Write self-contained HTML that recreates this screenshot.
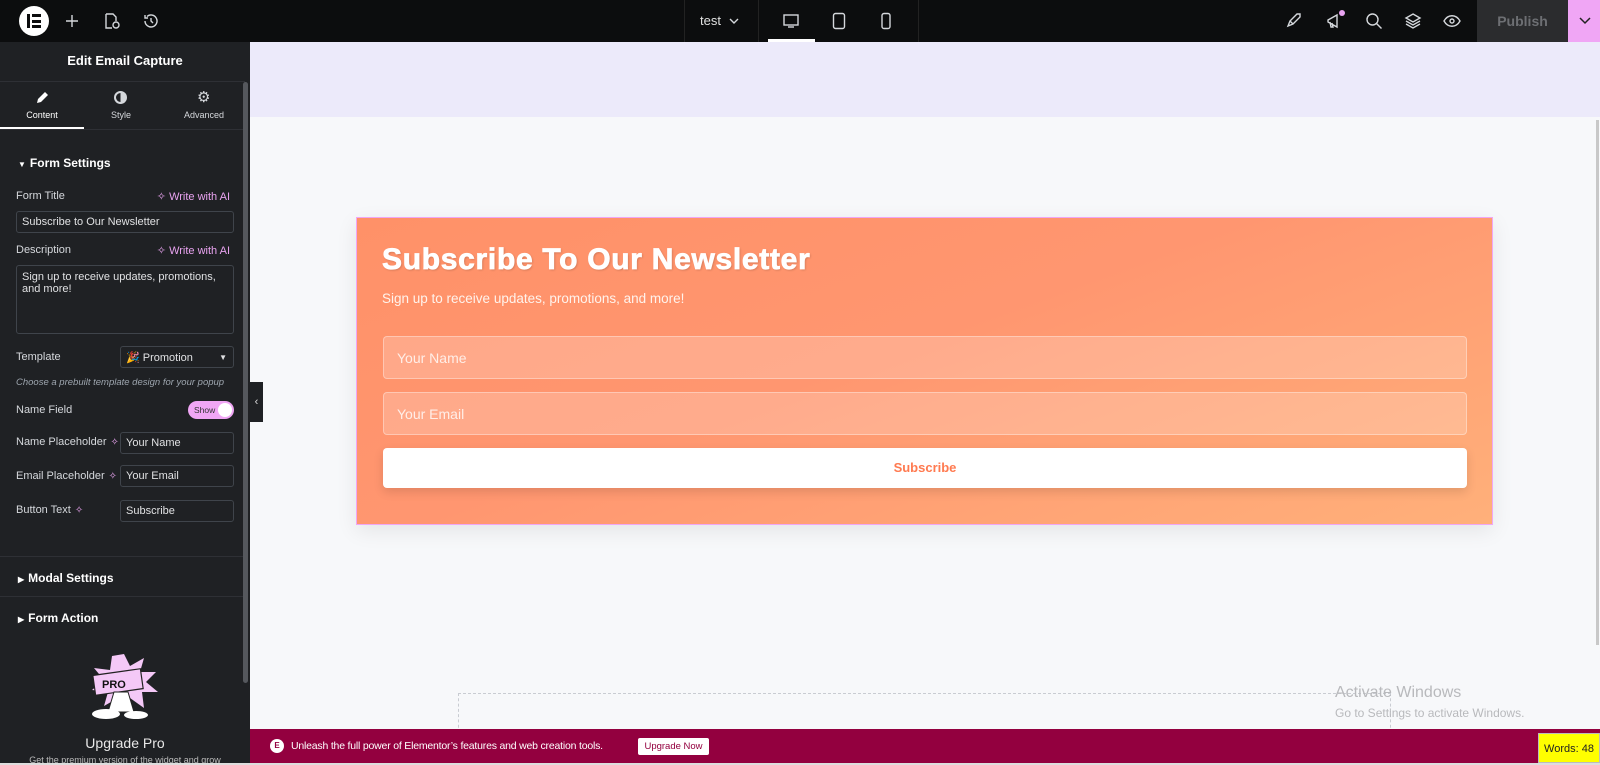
<!DOCTYPE html>
<html><head><meta charset="utf-8"><style>
*{box-sizing:border-box;margin:0;padding:0}
body{width:1600px;height:765px;overflow:hidden;font-family:"Liberation Sans",sans-serif;background:#f7f8fa;position:relative}
.a{position:absolute}
#top{left:0;top:0;width:1600px;height:42px;background:#0c0d0e}
#side{left:0;top:42px;width:250px;height:723px;background:#1f2124;color:#d5d8dc;font-size:11px}
.lbl{position:absolute;left:16px;font-size:11px;color:#d5d8dc}
.inp{position:absolute;background:#1f2124;border:1px solid #3f444b;border-radius:3px;color:#e0e1e3;font-size:11px;padding:0 5px;display:flex;align-items:center}
.ai{position:absolute;right:20px;color:#e9a3f0;font-size:11px}
.spk{color:#e9a3f0;font-size:10px;margin-left:4px}
.hd{position:absolute;left:18px;font-weight:bold;font-size:12px;color:#fff}
.dv{position:absolute;left:0;width:245px;height:1px;background:#2e3035}
.ic{stroke:#d5d8dc;fill:none;stroke-width:1.4}
</style></head><body>
<div id="top" class="a">
 <div class="a" style="left:19px;top:6px;width:30px;height:30px;border-radius:50%;background:#fff"></div>
 <div class="a" style="left:27px;top:14px;width:3px;height:14px;background:#0c0d0e"></div>
 <div class="a" style="left:32px;top:14px;width:9px;height:3px;background:#0c0d0e"></div>
 <div class="a" style="left:32px;top:19.5px;width:9px;height:3px;background:#0c0d0e"></div>
 <div class="a" style="left:32px;top:25px;width:9px;height:3px;background:#0c0d0e"></div>
 <svg class="a" style="left:64px;top:13px" width="16" height="16"><path class="ic" d="M8 2v12M2 8h12"/></svg>
 <svg class="a" style="left:103px;top:12px" width="18" height="18"><path class="ic" d="M3 2h7l3 3v4M3 2v14h6"/><circle class="ic" cx="13" cy="13" r="3"/></svg>
 <svg class="a" style="left:142px;top:12px" width="18" height="18"><path class="ic" d="M3 9a6 6 0 1 0 2-4.5M3 3v3h3M9 6v3l2 2"/></svg>
 <div class="a" style="left:684px;top:0;width:1px;height:42px;background:#222"></div>
 <div class="a" style="left:758px;top:0;width:1px;height:42px;background:#222"></div>
 <div class="a" style="left:918px;top:0;width:1px;height:42px;background:#222"></div>
 <div class="a" style="left:700px;top:13px;color:#e0e0e0;font-size:13px">test</div>
 <svg class="a" style="left:729px;top:17px" width="10" height="8"><path class="ic" d="M1 2l4 4 4-4"/></svg>
 <svg class="a" style="left:782px;top:13px" width="18" height="16"><rect class="ic" x="2" y="2" width="14" height="10"/><path class="ic" d="M6 14h6"/></svg>
 <div class="a" style="left:768px;top:39px;width:47px;height:3px;background:#fff"></div>
 <svg class="a" style="left:832px;top:12px" width="14" height="18"><rect class="ic" x="1.5" y="1.5" width="11" height="15" rx="2"/></svg>
 <svg class="a" style="left:880px;top:12px" width="12" height="18"><rect class="ic" x="2" y="1.5" width="8" height="15" rx="2"/></svg>
 <svg class="a" style="left:1284px;top:12px" width="18" height="18"><path class="ic" d="M4 14l2-5 7-7 3 0 0 3-7 7-5 2zM6 9l3 3"/></svg>
 <svg class="a" style="left:1325px;top:12px" width="18" height="18"><path class="ic" d="M3 8l9-5v12L3 10zM5 10l1 5h2l-1-4"/></svg>
 <div class="a" style="left:1339px;top:10px;width:6px;height:6px;border-radius:50%;background:#e9a3f0"></div>
 <svg class="a" style="left:1365px;top:12px" width="18" height="18"><circle class="ic" cx="7.5" cy="7.5" r="5.5"/><path class="ic" d="M11.5 11.5l5 5"/></svg>
 <svg class="a" style="left:1404px;top:12px" width="18" height="18"><path class="ic" d="M9 2l7 4-7 4-7-4zM2 9l7 4 7-4M2 12l7 4 7-4"/></svg>
 <svg class="a" style="left:1443px;top:12px" width="18" height="18"><path class="ic" d="M1 9c4-7 12-7 16 0c-4 7-12 7-16 0z"/><circle class="ic" cx="9" cy="9" r="2"/></svg>
 <div class="a" style="left:1477px;top:0;width:91px;height:42px;background:#2b2c2e;color:#6d6f73;font-weight:bold;font-size:14px;text-align:center;line-height:42px">Publish</div>
 <div class="a" style="left:1568px;top:0;width:32px;height:42px;background:#f0a6f5"></div>
 <svg class="a" style="left:1579px;top:17px" width="12" height="8"><path d="M1 1l5 5 5-5" stroke="#222" fill="none" stroke-width="1.5"/></svg>
</div>

<div id="side" class="a">
 <div class="a" style="left:0;top:11px;width:250px;text-align:center;font-weight:bold;font-size:13px;color:#fff">Edit Email Capture</div>
 <div class="dv" style="top:39px"></div>
 <svg class="a" style="left:35px;top:49px" width="14" height="14"><path d="M2 12l1-4 7-7 3 3-7 7z" fill="#fff"/></svg>
 <div class="a" style="left:0;top:68px;width:84px;text-align:center;font-size:9px;color:#fff">Content</div>
 <div class="a" style="left:114px;top:49px;width:13px;height:13px;border-radius:50%;border:2px solid #d5d8dc;background:linear-gradient(90deg,transparent 50%,#d5d8dc 50%)"></div>
 <div class="a" style="left:84px;top:68px;width:74px;text-align:center;font-size:9px">Style</div>
 <div class="a" style="left:197px;top:46px;font-size:15px;color:#d5d8dc">⚙</div>
 <div class="a" style="left:165px;top:68px;width:78px;text-align:center;font-size:9px">Advanced</div>
 <div class="a" style="left:0;top:85px;width:84px;height:2px;background:#fff"></div>
 <div class="dv" style="top:87px"></div>
 <div class="hd" style="top:114px"><span style="font-size:8px;margin-right:4px">▼</span>Form Settings</div>
 <div class="lbl" style="top:148px">Form Title</div><div class="ai" style="top:148px">✧ Write with AI</div>
 <div class="inp" style="left:16px;top:169px;width:218px;height:22px">Subscribe to Our Newsletter</div>
 <div class="lbl" style="top:202px">Description</div><div class="ai" style="top:202px">✧ Write with AI</div>
 <div class="inp" style="left:16px;top:223px;width:218px;height:69px;align-items:flex-start;padding-top:5px;line-height:12px">Sign up to receive updates, promotions, and more!</div>
 <div class="lbl" style="top:309px">Template</div>
 <div class="inp" style="left:120px;top:304px;width:114px;height:22px;font-size:11px">🎉&nbsp;Promotion<span style="position:absolute;right:6px;font-size:8px">▼</span></div>
 <div class="lbl" style="top:335px;font-style:italic;font-size:9.5px;color:#9da5ae">Choose a prebuilt template design for your popup</div>
 <div class="lbl" style="top:362px">Name Field</div>
 <div class="a" style="left:188px;top:359px;width:46px;height:18px;border-radius:9px;background:#f0a6f5;font-size:8.5px;color:#333;padding:4px 0 0 6px">Show<div class="a" style="right:2px;top:2px;width:14px;height:14px;border-radius:50%;background:#fff"></div></div>
 <div class="lbl" style="top:394px">Name Placeholder<span class="spk">✧</span></div>
 <div class="inp" style="left:120px;top:390px;width:114px;height:22px">Your Name</div>
 <div class="lbl" style="top:428px">Email Placeholder<span class="spk">✧</span></div>
 <div class="inp" style="left:120px;top:423px;width:114px;height:22px">Your Email</div>
 <div class="lbl" style="top:462px">Button Text<span class="spk">✧</span></div>
 <div class="inp" style="left:120px;top:458px;width:114px;height:22px">Subscribe</div>
 <div class="dv" style="top:514px"></div>
 <div class="hd" style="top:529px"><span style="font-size:8px;margin-right:4px">▶</span>Modal Settings</div>
 <div class="dv" style="top:554px"></div>
 <div class="hd" style="top:569px"><span style="font-size:8px;margin-right:4px">▶</span>Form Action</div>
 <svg class="a" style="left:84px;top:610px" width="82" height="68">
  <polygon points="40,2 46,14 60,6 56,20 72,20 62,30 74,40 58,40 60,56 46,46 40,60 34,46 20,54 24,40 8,38 20,28 10,16 26,18 28,4" fill="#f4c8f7"/>
  <rect x="10" y="20" width="48" height="20" fill="#f4c8f7" stroke="#222" stroke-width="1.2" transform="rotate(-8 34 30)"/>
  <text x="18" y="36" font-size="11" font-weight="bold" fill="#111" font-family="Liberation Sans">PRO</text>
  <path d="M30 40l-6 20h26l-6-20z" fill="#fff" stroke="#222"/>
  <ellipse cx="22" cy="62" rx="14" ry="5" fill="#fff"/><ellipse cx="52" cy="63" rx="12" ry="4" fill="#fff"/>
 </svg>
 <div class="a" style="left:0;top:693px;width:250px;text-align:center;font-size:14px;color:#e8e8e8">Upgrade Pro</div>
 <div class="a" style="left:0;top:713px;width:250px;text-align:center;font-size:9px;color:#bbb">Get the premium version of the widget and grow</div>
 <div class="a" style="left:243px;top:40px;width:5px;height:601px;background:#55585d;border-radius:3px"></div>
</div>

<div class="a" style="left:250px;top:42px;width:1350px;height:75px;background:#eceafa"></div>
<div class="a" style="left:250px;top:382px;width:13px;height:40px;background:#1f2124;color:#ddd;font-size:11px;text-align:center;line-height:40px">‹</div>
<div class="a" style="left:1596px;top:120px;width:3px;height:525px;background:#c8c8c8"></div>

<div class="a" style="left:356px;top:217px;width:1137px;height:308px;border:1px solid #f0a6f5;background:linear-gradient(160deg,#ff9168 0%,#ff9670 45%,#ffb07a 100%);box-shadow:0 6px 20px rgba(0,0,0,.08)"></div>
<div class="a" style="left:382px;top:243px;font-family:'Liberation Sans',sans-serif;font-weight:bold;font-size:30px;color:#fff;letter-spacing:0.7px;-webkit-text-stroke:0.8px #fff;text-shadow:1px 1px 2px rgba(0,0,0,.2)">Subscribe To Our Newsletter</div>
<div class="a" style="left:382px;top:291px;font-size:13.5px;color:#fff3ec">Sign up to receive updates, promotions, and more!</div>
<div class="a" style="left:383px;top:336px;width:1084px;height:43px;border:1px solid rgba(255,255,255,.35);border-radius:4px;background:rgba(255,255,255,.2);color:rgba(255,255,255,.8);font-size:14px;padding:13px 0 0 13px">Your Name</div>
<div class="a" style="left:383px;top:392px;width:1084px;height:43px;border:1px solid rgba(255,255,255,.35);border-radius:4px;background:rgba(255,255,255,.2);color:rgba(255,255,255,.8);font-size:14px;padding:13px 0 0 13px">Your Email</div>
<div class="a" style="left:383px;top:448px;width:1084px;height:40px;border-radius:4px;background:#fff;color:#ff7a50;font-weight:bold;font-size:13px;text-align:center;line-height:40px;box-shadow:0 4px 10px rgba(0,0,0,.12)">Subscribe</div>

<div class="a" style="left:458px;top:693px;width:933px;height:40px;border:1px dashed #c9ccd2;border-bottom:none"></div>
<div class="a" style="left:1335px;top:684px;font-size:16px;color:#b8b9bc">Activate Windows</div>
<div class="a" style="left:1335px;top:706px;font-size:12px;color:#b8b9bc">Go to Settings to activate Windows.</div>

<div class="a" style="left:250px;top:729px;width:1350px;height:34px;background:#93003f"></div>
<div class="a" style="left:270px;top:739px;width:14px;height:14px;border-radius:50%;background:#fff;color:#93003f;font-size:8px;text-align:center;line-height:14px;font-weight:bold">E</div>
<div class="a" style="left:291px;top:740px;font-size:10.5px;letter-spacing:-0.2px;color:#fff;white-space:nowrap">Unleash the full power of Elementor’s features and web creation tools.</div>
<div class="a" style="left:638px;top:738px;width:71px;height:17px;background:#fff;border-radius:2px;color:#93003f;font-size:9.5px;text-align:center;line-height:17px">Upgrade Now</div>
<div class="a" style="left:1538px;top:733px;width:62px;height:30px;background:#ffff00;color:#222;font-size:11px;text-align:center;line-height:30px;border:1px solid #bbb">Words: 48</div>
<div class="a" style="left:0;top:763px;width:1600px;height:2px;background:#ddd"></div>
</body></html>
